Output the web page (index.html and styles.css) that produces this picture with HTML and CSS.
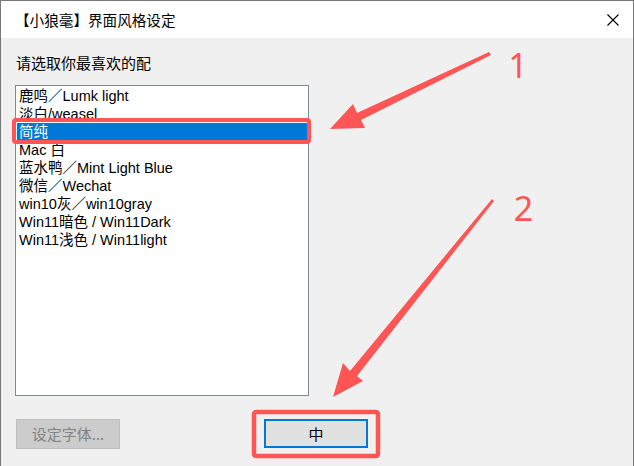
FILE: index.html
```html
<!DOCTYPE html>
<html lang="zh-CN">
<head>
<meta charset="utf-8">
<title>【小狼毫】界面风格设定</title>
<link rel="stylesheet" href="styles.css">
</head>
<body>
<div class="window">
  <div class="titlebar">
    <span class="title">【小狼毫】界面风格设定</span>
    <span class="close">
      <svg width="12" height="12" viewBox="0 0 12 12"><path d="M0.5 0.5 L11.5 11.5 M11.5 0.5 L0.5 11.5" stroke="#000" stroke-width="1.1" fill="none"/></svg>
    </span>
  </div>
  <div class="content">
    <div class="label">请选取你最喜欢的配</div>
    <div class="listbox">
      <div class="item">鹿鸣／Lumk light</div>
      <div class="item">淡白/weasel</div>
      <div class="item selected">简纯</div>
      <div class="item">Mac 白</div>
      <div class="item">蓝水鸭／Mint Light Blue</div>
      <div class="item">微信／Wechat</div>
      <div class="item">win10灰／win10gray</div>
      <div class="item">Win11暗色 / Win11Dark</div>
      <div class="item">Win11浅色 / Win11light</div>
    </div>
    <div class="buttons">
      <div class="btn disabled">设定字体...</div>
      <div class="btn primary">中</div>
    </div>
  </div>
  <svg class="overlay" width="634" height="466" viewBox="0 0 634 466">
    <rect x="14" y="120" width="295" height="22" rx="2" fill="none" stroke="#ff5555" stroke-width="4"/>
    <rect x="254" y="412" width="124" height="44" rx="2" fill="none" stroke="#ff5555" stroke-width="4.5"/>
    <polygon points="489,52 357,113 353,104 330,129 365,128 361,120 491,55" fill="#ff5555"/>
    <polygon points="492,199 350,371 343,363 333,397 363,381 357,376 494,201" fill="#ff5555"/>
    <text x="518" y="78" class="num" text-anchor="middle">1</text>
    <text x="523.5" y="221" class="num" text-anchor="middle">2</text>
  </svg>
</div>
</body>
</html>
```

FILE: styles.css
```css
html, body {
  margin: 0;
  padding: 0;
}
body {
  font-family: "Noto Sans CJK SC", sans-serif;
  font-size: 15px;
  color: #000;
  background: #f0f0f0;
}
.window {
  position: relative;
  width: 634px;
  height: 466px;
  box-sizing: border-box;
  border: 1px solid #777777;
  border-bottom: none;
  background: #f0f0f0;
  overflow: hidden;
}
.titlebar {
  height: 37px;
  background: #ffffff;
  display: flex;
  align-items: center;
  justify-content: space-between;
  padding: 0 14px 0 14px;
}
.title {
  font-size: 14.6px;
  line-height: 18px;
}
.close {
  display: flex;
  width: 12px;
  height: 12px;
}
.content {
  padding: 16px 0 0 14px;
}
.label {
  line-height: 18px;
  height: 18px;
  margin-left: 1px;
  margin-bottom: 13px;
}
.listbox {
  width: 294px;
  height: 311px;
  box-sizing: border-box;
  border: 1px solid #828790;
  background: #ffffff;
  padding: 1px;
  font-family: "Liberation Sans", "Noto Sans CJK SC", sans-serif;
  font-size: 14.5px;
}
.item {
  height: 17px;
  padding-top: 1px;
  line-height: 17px;
  padding-left: 2px;
  white-space: nowrap;
}
.item.selected {
  background: #0078d7;
  color: #ffffff;
}
.buttons {
  display: flex;
  margin-top: 23px;
  margin-left: 1px;
}
.btn {
  width: 104px;
  box-sizing: border-box;
  display: flex;
  align-items: center;
  justify-content: center;
  line-height: 18px;
}
.btn.disabled {
  height: 30px;
  background: #cccccc;
  border: 1px solid #bfbfbf;
  color: #838383;
}
.btn.primary {
  height: 29px;
  margin-left: 144px;
  background: #e1e1e1;
  border: 2px solid #0078d7;
}
.overlay {
  position: absolute;
  left: -1px;
  top: -1px;
  pointer-events: none;
}
.num {
  font-family: "Noto Sans", sans-serif;
  font-size: 34px;
  fill: #ff5555;
}
```
